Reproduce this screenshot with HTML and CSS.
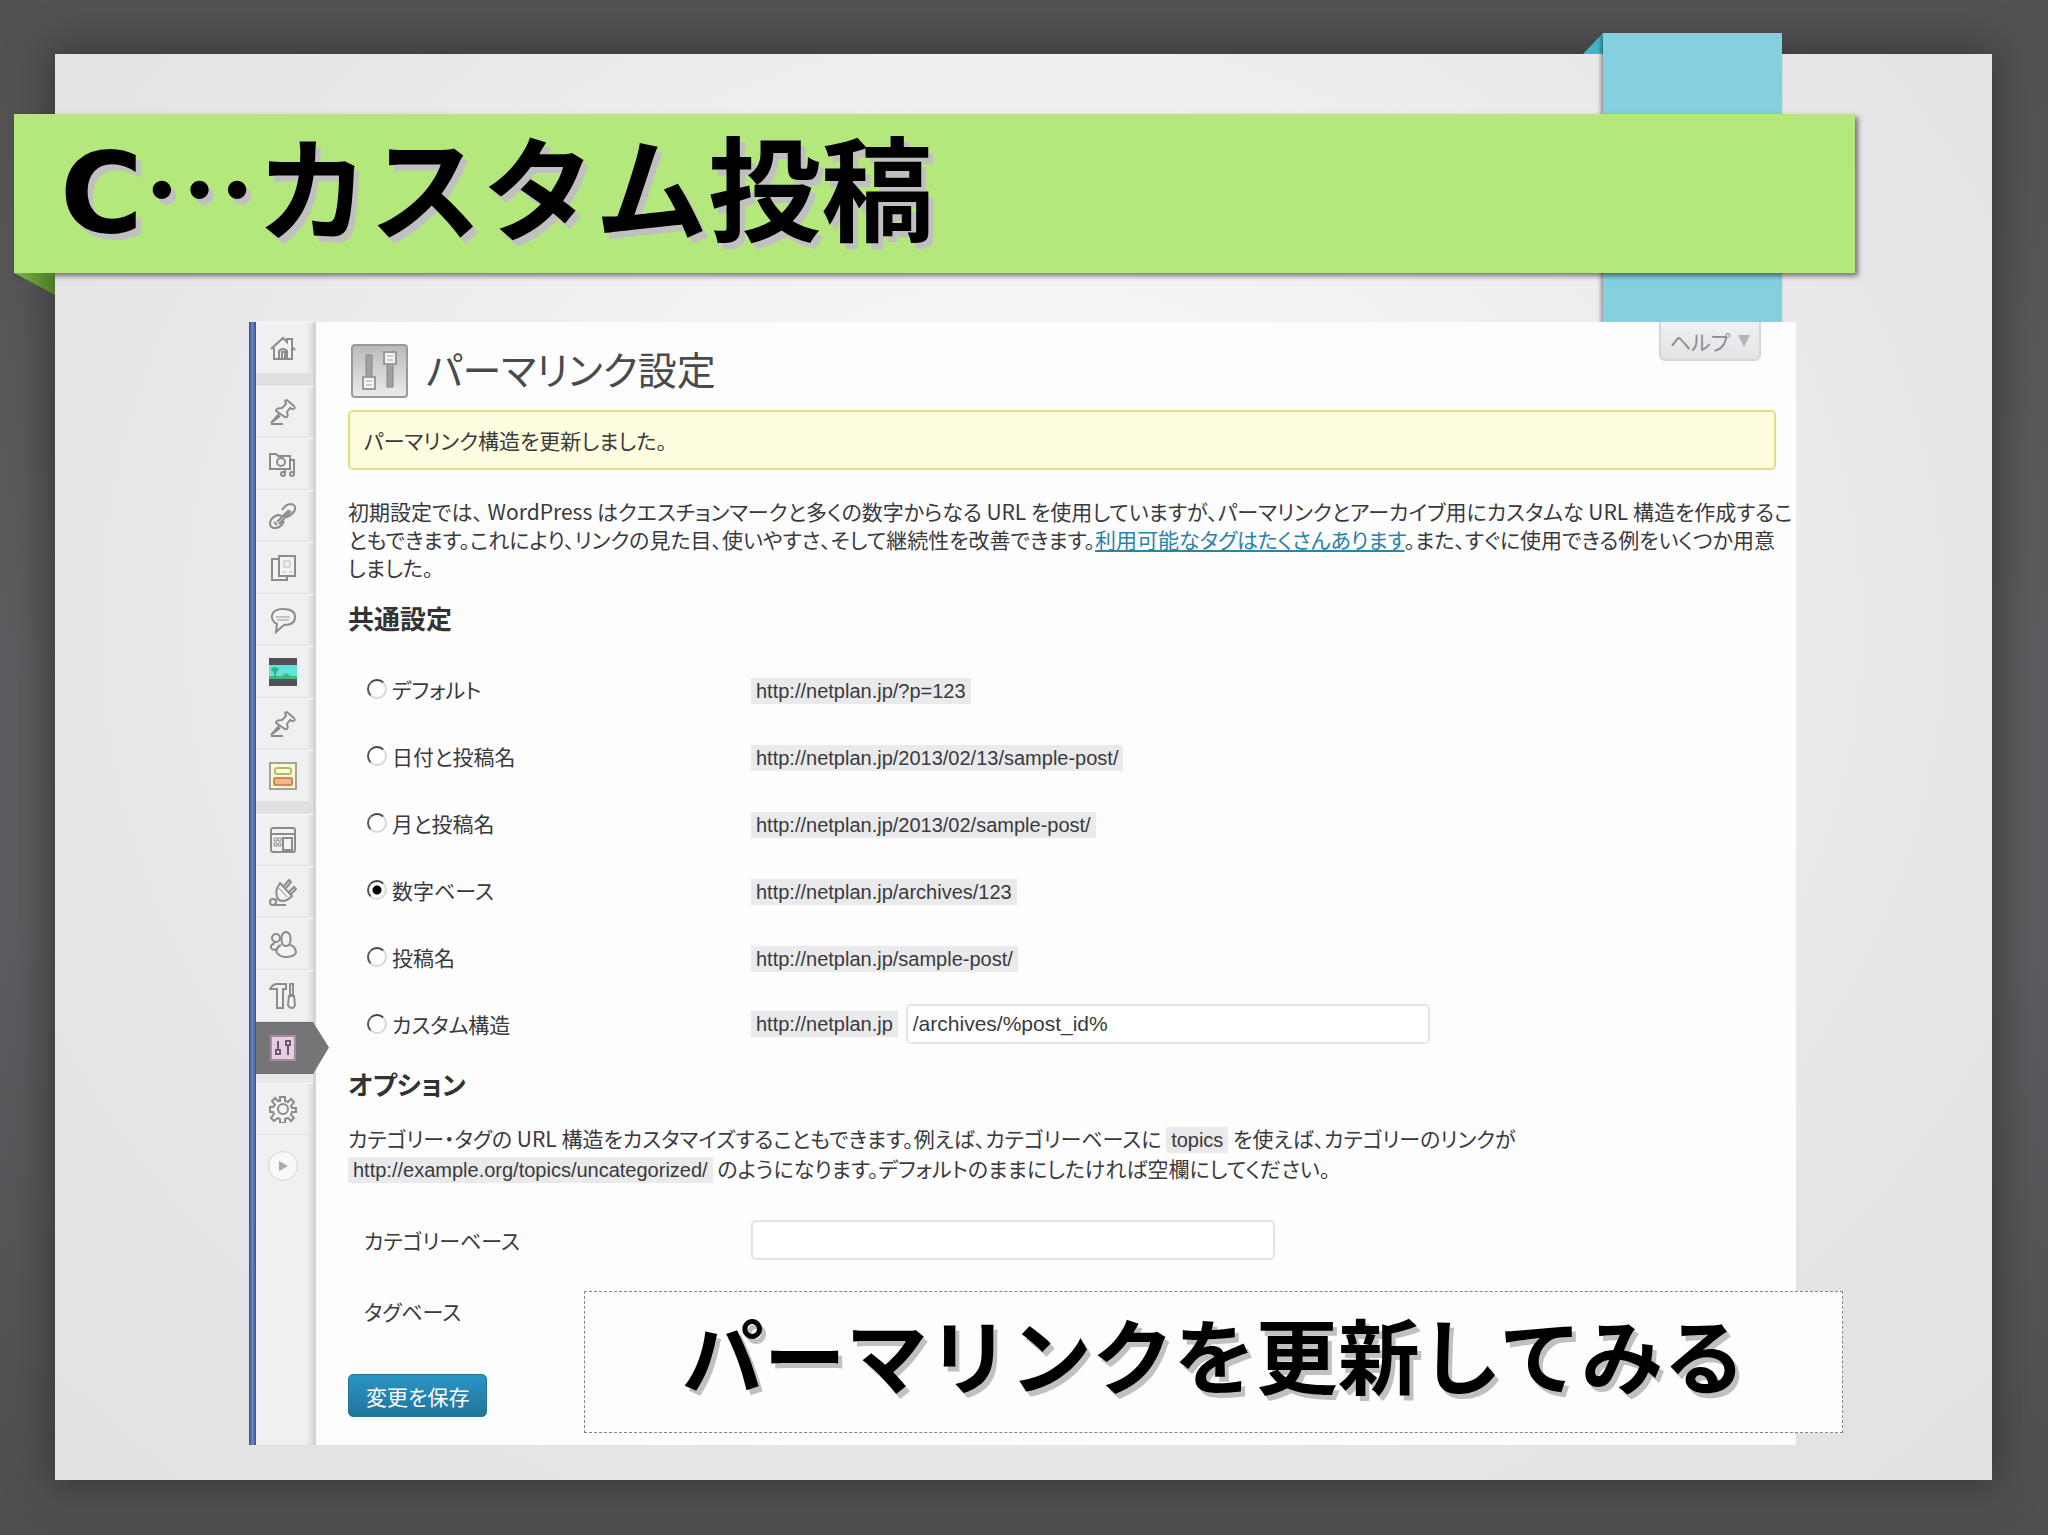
FILE: index.html
```html
<!DOCTYPE html>
<html lang="ja">
<head>
  <meta charset="utf-8">
  <title>C…カスタム投稿</title>
  <link rel="stylesheet" href="styles.css">
</head>
<body>
  <main class="sheet">
    <svg class="ribbon-fold" viewBox="0 0 20 21" aria-hidden="true"><path d="M20 0v21H0z" fill="#3fb6c6"/></svg>
    <div class="ribbon"></div>

    <header class="banner">
      <h1><span class="latin">C</span>…カスタム投稿</h1>
      <svg class="banner-fold" viewBox="0 0 41 22" aria-hidden="true">
        <defs>
          <linearGradient id="fold"><stop offset="0" stop-color="#7db548"/><stop offset="1" stop-color="#4c7a22"/></linearGradient>
        </defs>
        <path d="M0 0h41v22z" fill="url(#fold)"/>
      </svg>
    </header>

    <section class="screen">
      <nav class="menu" aria-label="メニュー">
        <a href="#" class="item" aria-label="ダッシュボード">
          <svg viewBox="0 0 28 28"><path d="M2 15 14 4l4 4V5h5v8l3 3M5 14v11h18V14M10 25v-8q4-4 8 0v8M13 25v-7h3v7" /></svg>
        </a>
        <div class="separator"></div>
        <a href="#" class="item" aria-label="投稿">
          <svg viewBox="0 0 28 28"><path d="M10 16 2 25l9-7M2 26h12"/><path d="M16 3q1-2 3 0l6 5q2 3-2 3l-2-1-3 4q2 6-2 5L7 13q0-3 6-3l4-4z"/></svg>
        </a>
        <a href="#" class="item" aria-label="メディア">
          <svg viewBox="0 0 28 28"><path d="M16 10h9v13M16 14v9"/><path d="M1 4h6l2 2h12v13H1z"/><circle cx="12" cy="12" r="4"/><circle cx="14" cy="24" r="2"/><circle cx="23" cy="24" r="2"/></svg>
        </a>
        <a href="#" class="item" aria-label="リンク">
          <svg viewBox="0 0 28 28"><path d="M13 8q4-6 9-6 5 1 4 5-1 5-8 8l-3-1M15 19q-3 7-9 7-5 0-5-5 1-6 8-8l4 1M8 20 20 8M10 22 22 9M5 20l3 3"/></svg>
        </a>
        <a href="#" class="item" aria-label="固定ページ">
          <svg viewBox="0 0 28 28"><path d="M3 5h15v21H3z"/><path d="M10 2h16v20H10z"/><path d="M15 7h6v6h-6zM14 18h3M20 18h3" stroke="#bbb" stroke-width="1"/></svg>
        </a>
        <a href="#" class="item" aria-label="コメント">
          <svg viewBox="0 0 28 28"><path d="M14 3c8 0 12 3 12 8s-4 8-11 8l-8 7 1-8c-8-4-7-15 6-15z"/><path d="M7 11h14M8 14h12" stroke="#c4c4c6"/></svg>
        </a>
        <a href="#" class="item" aria-label="スライド">
          <svg class="plain" viewBox="0 0 28 28"><path d="M0 0h28v28H0z" fill="#505058"/><path d="M0 7h28v14H0z" fill="#5fe3da"/><path d="M0 18h13l4-3 5 3h6v3H0z" fill="#43b878"/><path d="M2 11q4-4 8 0l-3 4v4H5v-4z" fill="#3fae86"/></svg>
        </a>
        <a href="#" class="item" aria-label="カスタム投稿">
          <svg viewBox="0 0 28 28"><path d="M10 16 2 25l9-7M2 26h12"/><path d="M16 3q1-2 3 0l6 5q2 3-2 3l-2-1-3 4q2 6-2 5L7 13q0-3 6-3l4-4z"/></svg>
        </a>
        <a href="#" class="item" aria-label="フォーム">
          <svg class="plain" viewBox="0 0 28 28"><path d="M1 1h26v26H1z" fill="#fbf8dc" stroke="#a8a494" stroke-width="2"/><rect x="6" y="6" width="16" height="6" rx="2" fill="#fffef0" stroke="#b4bd62" stroke-width="2"/><rect x="5" y="16" width="18" height="7" rx="1" fill="#f3b78e" stroke="#d98752" stroke-width="2"/></svg>
        </a>
        <div class="separator"></div>
        <a href="#" class="item" aria-label="外観">
          <svg viewBox="0 0 28 28"><rect x="2" y="2" width="24" height="24" rx="2"/><path d="M2 8h24M14 12h9v12h-9z"/><path d="M5 12h3v3H5zM9 12h3v3H9zM5 17h3v3H5zM9 17h3v3H9z" stroke-width="1"/></svg>
        </a>
        <a href="#" class="item" aria-label="プラグイン">
          <svg viewBox="0 0 28 28"><path d="M15 8l5-6 2 2-5 6M20 14l5-5 2 2-5 5M8 21l-3 2M5 27h12"/><path d="M11 5 23 18q-7 7-13 4Q4 15 11 5z"/><path d="M10 10l8 9" stroke-width="1"/><circle cx="4" cy="24" r="3"/></svg>
        </a>
        <a href="#" class="item" aria-label="ユーザー">
          <svg viewBox="0 0 28 28"><circle cx="7" cy="8" r="4"/><path d="M6 13q-5 2-4 5 2 3 6 1M13 13q-2-10 4-11 6 1 4 11-1 3-4 3t-4-3zM12 15q-6 3-4 8 3 4 10 4 9-1 9-5-1-6-6-7"/></svg>
        </a>
        <a href="#" class="item" aria-label="ツール">
          <svg viewBox="0 0 28 28"><path d="M1 7q3-5 7-5h9v5h-3v19H8V7zM21 2h3v11h-3zM20 14h5l1 9q-1 3-3 3-3 0-4-3z"/></svg>
        </a>
        <a href="#" class="item current" aria-label="設定">
          <svg class="plain" viewBox="0 0 28 28"><path d="M2 2h24v24H2z" fill="#e6cfe2" stroke="#a58aa2" stroke-width="2"/><path d="M9 7v13M19 9v12" stroke="#6d5a6c" stroke-width="2"/><path d="M7 16h4v4H7zM17 7h4v4h-4z" fill="#fff" stroke="#6d5a6c"/></svg>
          <svg class="arrow" viewBox="0 0 16 53" preserveAspectRatio="none"><path d="M0 0 16 26 0 53z"/></svg>
        </a>
        <div class="separator"></div>
        <a href="#" class="item" aria-label="オプション設定">
          <svg viewBox="0 0 28 28"><path d="M11 6V2h5v4l3 1 3-3 3 3-3 4 1 2h4v4h-4l-1 3 3 3-3 3-3-3-3 1v4h-5v-4l-2-1-4 3-3-3 3-4-1-2H1v-5h3l2-2-3-4 3-3 3 3z"/><circle cx="14" cy="14" r="5"/></svg>
        </a>
        <button class="collapse" type="button" aria-label="メニューを閉じる">
          <svg viewBox="0 0 28 28"><path d="m10 9 9 5-9 5z"/></svg>
        </button>
      </nav>

      <div class="content">
        <div class="top">
          <div class="heading">
            <svg class="settings-icon" viewBox="0 0 57 54" aria-hidden="true">
              <defs>
                <linearGradient id="plate" x2="0" y2="1"><stop offset="0" stop-color="#b9b9bb"/><stop offset="1" stop-color="#ececee"/></linearGradient>
              </defs>
              <rect x="1" y="1" width="55" height="52" rx="3" fill="url(#plate)" stroke="#9a9a9c" stroke-width="2"/>
              <path d="M15 11h6v25h-6zM36 20h6v23h-6z" fill="#a0a0a2" stroke="#868688"/>
              <path d="M12 33h12v12H12zM33 8h12v12H33z" fill="#f4f4f4" stroke="#9a9a9c" stroke-width="2"/>
              <path d="M15 37h6M15 41h6M36 12h6M36 16h6" stroke="#a5a5a7"/>
            </svg>
            <h2>パーマリンク設定</h2>
          </div>
          <button class="help" type="button">ヘルプ <svg viewBox="0 0 12 12" aria-hidden="true"><path d="M0 0h12L6 12z" fill="#b5b4b6"/></svg></button>
        </div>

        <p class="notice">パーマリンク構造を更新しました。</p>

        <p class="lead">初期設定では、 WordPress はクエスチョンマークと多くの数字からなる URL を使用していますが、パーマリンクとアーカイブ用にカスタムな URL 構造を作成するこ<br>ともできます。これにより、リンクの見た目、使いやすさ、そして継続性を改善できます。<a href="#">利用可能なタグはたくさんあります</a>。また、すぐに使用できる例をいくつか用意<br>しました。</p>

        <form>
          <h3>共通設定</h3>
          <table class="structures">
            <tr>
              <th><label><input type="radio" name="structure">デフォルト</label></th>
              <td><code>http://netplan.jp/?p=123</code></td>
            </tr>
            <tr>
              <th><label><input type="radio" name="structure">日付と投稿名</label></th>
              <td><code>http://netplan.jp/2013/02/13/sample-post/</code></td>
            </tr>
            <tr>
              <th><label><input type="radio" name="structure">月と投稿名</label></th>
              <td><code>http://netplan.jp/2013/02/sample-post/</code></td>
            </tr>
            <tr>
              <th><label><input type="radio" name="structure" checked>数字ベース</label></th>
              <td><code>http://netplan.jp/archives/123</code></td>
            </tr>
            <tr>
              <th><label><input type="radio" name="structure">投稿名</label></th>
              <td><code>http://netplan.jp/sample-post/</code></td>
            </tr>
            <tr>
              <th><label><input type="radio" name="structure">カスタム構造</label></th>
              <td><div class="custom"><code>http://netplan.jp</code><input type="text" value="/archives/%post_id%" aria-label="カスタム構造"></div></td>
            </tr>
          </table>

          <h3>オプション</h3>
          <p class="option-text">カテゴリー・タグの URL 構造をカスタマイズすることもできます。例えば、カテゴリーベースに <code>topics</code> を使えば、カテゴリーのリンクが<br><code>http://example.org/topics/uncategorized/</code> のようになります。デフォルトのままにしたければ空欄にしてください。</p>
          <table class="bases">
            <tr>
              <th><label for="category">カテゴリーベース</label></th>
              <td><input type="text" id="category"></td>
            </tr>
            <tr>
              <th><label for="tag">タグベース</label></th>
              <td><input type="text" id="tag"></td>
            </tr>
          </table>
          <button class="save" type="submit">変更を保存</button>
        </form>
      </div>

      <p class="caption">パーマリンクを更新してみる</p>
    </section>
  </main>
</body>
</html>
```

FILE: styles.css
```css
* {
  box-sizing: border-box;
}

body {
  margin: 0;
  padding: 54px 56px 55px 55px;
  min-height: 100vh;
  background: linear-gradient(#525252, #5e5c60 45%, #5e5c60 60%, #504e51);
  font-family: "Noto Sans CJK JP", sans-serif;
  font-size: 21px;
  color: #3a3a3c;
}

h1, h2, h3, p {
  margin: 0;
}

.sheet {
  position: relative;
  display: flow-root;
  padding-bottom: 35px;
  background: radial-gradient(ellipse at 50% 40%, #fafafd, #f2f1f4 35%, #e5e4e6 75%, #e2e2e2);
  box-shadow: 0 0 36px 6px #383838;
}

/* ribbons */
.ribbon {
  position: absolute;
  top: -21px;
  right: 210px;
  width: 179px;
  height: 310px;
  background: #85d0df;
  box-shadow: -2px 2px 4px rgba(0, 0, 0, 0.4);
}

.ribbon-fold {
  position: absolute;
  top: -21px;
  right: 389px;
  width: 20px;
  height: 21px;
}

.banner {
  position: relative;
  margin: 60px 137px 0 -41px;
  padding: 0 46px 20px;
  background: #b5e87c;
  box-shadow: 3px 3px 5px rgba(0, 0, 0, 0.5);
}

.banner-fold {
  position: absolute;
  top: 100%;
  left: 0;
  width: 41px;
  height: 22px;
}

h1 {
  height: 139px;
  font: bold 113px/139px "Noto Sans CJK JP", sans-serif;
  color: #000;
  text-shadow: 5px 6px 0 #c0c0c0;
  white-space: nowrap;
}

.latin {
  font-family: "DejaVu Sans", sans-serif;
}

.screen {
  position: relative;
  display: flex;
  margin: 49px 196px 0 194px;
  background: #fefdfe;
}

.screen::before {
  content: "";
  width: 7px;
  background: linear-gradient(90deg, #34508f, #6b86bd 50%, #34508f);
}

/* side menu */
.menu {
  flex: none;
  width: 60px;
  background: #f0eff1;
  border-right: 3px solid #d3d2d4;
  box-shadow: inset -5px 0 4px -2px #dcdcde;
}

.item {
  position: relative;
  display: flex;
  align-items: center;
  justify-content: center;
  height: 52px;
  padding-right: 4px;
  border-top: 1px solid #fafafa;
  border-bottom: 1px solid #e0dfe1;
}

.item svg,
.collapse svg {
  width: 28px;
  height: 28px;
  fill: #f3f3f4;
  stroke: #8c8c8e;
  stroke-width: 2;
}

.item svg.plain {
  fill: none;
  stroke: none;
}

.separator {
  height: 12px;
  background: #dfdee0;
}

.current {
  background: #757577;
  border-color: #6a6a6c;
}

.current + .separator {
  height: 9px;
  background: #e8e7e9;
}

.item .arrow {
  position: absolute;
  top: -1px;
  left: 57px;
  width: 16px;
  height: 52px;
  fill: #757577;
  stroke: none;
}

.collapse {
  display: flex;
  margin: 16px 0 0 12px;
  padding: 0;
  border: 1px solid #d4d3d5;
  border-radius: 50%;
  background: #f8f8f8;
}

.collapse svg {
  fill: #aaa9ab;
  stroke: none;
}

/* settings page */
.content {
  flex: 1;
  min-width: 0;
  padding: 0 20px 28px 32px;
  font-feature-settings: "palt";
}

.top {
  display: flex;
  justify-content: space-between;
  align-items: flex-start;
}

.heading {
  display: flex;
  gap: 18px;
  padding: 22px 0 12px 3px;
}

.settings-icon {
  width: 57px;
  height: 54px;
}

h2 {
  font-size: 39px;
  font-weight: normal;
  line-height: 48px;
  color: #4a4a4c;
}

.help {
  display: flex;
  align-items: center;
  gap: 8px;
  height: 39px;
  margin-right: 15px;
  padding: 0 9px;
  border: 2px solid #d6d5d7;
  border-top: 0;
  border-radius: 0 0 6px 6px;
  background: linear-gradient(#f1f0f2, #e3e2e4);
  font: inherit;
  color: #8c8b8d;
}

.help svg {
  width: 12px;
  height: 12px;
}

.notice {
  padding: 0 14px;
  border: 2px solid #e2dd84;
  border-radius: 5px;
  background: #fffddf;
  line-height: 56px;
}

.lead {
  margin-top: 27px;
  line-height: 28px;
  white-space: nowrap;
}

a {
  color: #2a83a8;
}

h3 {
  font-size: 26px;
  line-height: 36px;
  color: #333;
}

.lead + form {
  margin-top: 19px;
}

table {
  width: 100%;
  border-collapse: collapse;
  table-layout: fixed;
}

th {
  width: 403px;
  padding: 0 0 0 16px;
  font-weight: normal;
  text-align: left;
}

td {
  padding: 0;
}

.structures {
  margin: 19px 0 9px;
}

.structures tr {
  height: 67px;
}

.structures label {
  display: flex;
  align-items: center;
  gap: 5px;
  padding-left: 3px;
}

input[type="radio"] {
  appearance: none;
  width: 20px;
  height: 20px;
  margin: 0;
  border: 2px solid;
  border-color: #444 #d8d8d8 #d8d8d8 #555;
  border-radius: 50%;
  background: #fff;
}

input[type="radio"]:checked {
  background: radial-gradient(circle, #000 4px, #fff 5px);
}

code {
  display: inline-block;
  padding: 0 5px;
  background: #eae9eb;
  font-family: "Liberation Sans", sans-serif;
  font-size: 20px;
  line-height: 26px;
}

.custom {
  display: flex;
  align-items: center;
  gap: 8px;
}

input[type="text"] {
  display: block;
  width: 524px;
  height: 40px;
  padding: 0 5px;
  border: 2px solid #e4e3e5;
  border-radius: 5px;
  background: #fff;
  font: 21px "Liberation Sans", sans-serif;
  color: inherit;
}

.option-text {
  margin-top: 21px;
  line-height: 30px;
  white-space: nowrap;
}

.bases {
  margin: 21px 0 28px;
}

.bases tr {
  height: 71px;
}

.save {
  display: block;
  height: 43px;
  padding: 0 17px;
  border: 1px solid #21759b;
  border-radius: 5px;
  background: linear-gradient(#2a95c5, #21759b);
  font: inherit;
  color: #fff;
}

.caption {
  position: absolute;
  right: -47px;
  bottom: 12px;
  left: 335px;
  padding-bottom: 18px;
  border: 1px dashed #858487;
  background: #fefdfe;
  font: bold 82px/122px "Noto Sans CJK JP", sans-serif;
  color: #000;
  text-align: center;
  text-shadow: 4px 5px 0 #c0c0c0;
  white-space: nowrap;
}
```
